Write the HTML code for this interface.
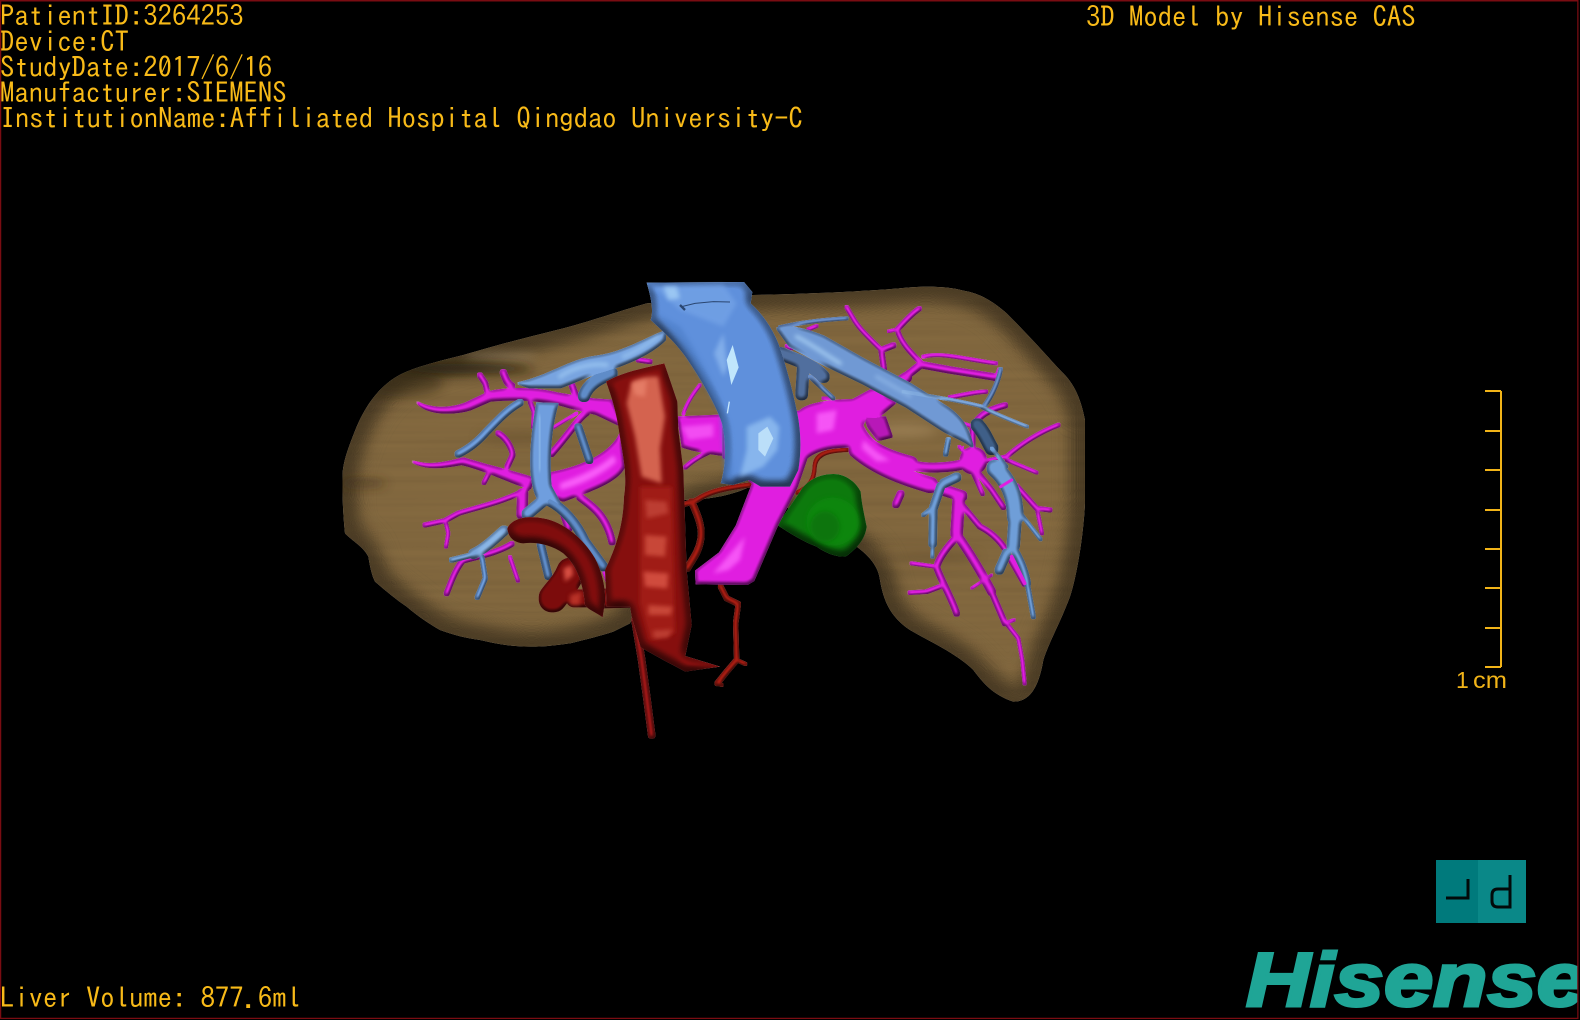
<!DOCTYPE html>
<html lang="en"><head><meta charset="utf-8"><title>3D Model by Hisense CAS</title>
<style>
html,body{margin:0;padding:0;background:#000;width:1580px;height:1020px;overflow:hidden}
svg{display:block;position:absolute;left:0;top:0}
.t{font-family:"IPAGothic","Liberation Mono",monospace;font-size:28.66px;fill:#f8ba18}
.s{fill:none;stroke-linecap:round;stroke-linejoin:round}
</style></head><body>
<svg width="1580" height="1020" viewBox="0 0 1580 1020" xmlns="http://www.w3.org/2000/svg">
<defs>
<path id="lv" d="M950 100 C860 125 780 155 680 180 C600 200 520 220 400 255 C320 275 240 295 200 320 C150 350 110 400 80 470 C60 520 40 570 38 610 C36 680 40 740 45 790 C70 815 100 830 115 860 C120 890 125 915 135 935 C170 965 200 990 230 1010 C265 1040 295 1060 330 1080 C370 1095 410 1105 450 1110 C500 1122 550 1130 600 1130 C650 1130 680 1125 720 1120 C770 1108 810 1098 850 1085 L900 1060 L1060 690 C1120 690 1200 680 1260 650 L1580 830 C1620 860 1645 890 1650 930 C1660 990 1680 1040 1740 1080 C1790 1110 1880 1150 1930 1200 C1960 1240 1990 1275 2050 1295 C2095 1295 2125 1260 2140 1170 C2160 1110 2190 1060 2220 980 C2240 920 2260 800 2265 700 L2265 450 C2255 400 2240 350 2200 310 C2170 280 2120 220 2030 130 C1990 95 1950 70 1900 62 C1860 50 1800 48 1740 52 C1660 60 1500 70 1270 75 Z"/>
<clipPath id="lc"><use href="#lv"/></clipPath>
<filter id="tube" x="0" y="0" width="1580" height="1020" filterUnits="userSpaceOnUse" color-interpolation-filters="sRGB">
<feMorphology in="SourceGraphic" operator="dilate" radius="1.05" result="d"/>
<feGaussianBlur in="d" stdDeviation="0.35" result="d2"/>
<feColorMatrix in="d2" type="matrix" values="0 0 0 0 0 0 0 0 0 0 0 0 0 0 0 0 0 0 1 0" result="al"/>
<feGaussianBlur in="al" stdDeviation="2.4" result="b"/>
<feDiffuseLighting in="b" surfaceScale="4.5" diffuseConstant="1.06" lighting-color="#fff" result="l"><feDistantLight azimuth="250" elevation="78"/></feDiffuseLighting>
<feComposite in="l" in2="al" operator="in" result="li"/>
<feBlend in="d2" in2="li" mode="multiply"/>
</filter>
<filter id="big" x="0" y="0" width="1580" height="1020" filterUnits="userSpaceOnUse" color-interpolation-filters="sRGB">
<feGaussianBlur in="SourceAlpha" stdDeviation="5" result="b"/>
<feDiffuseLighting in="b" surfaceScale="9" diffuseConstant="1.05" lighting-color="#fff" result="l"><feDistantLight azimuth="250" elevation="76"/></feDiffuseLighting>
<feComposite in="l" in2="SourceAlpha" operator="in" result="li"/>
<feBlend in="SourceGraphic" in2="li" mode="multiply"/>
</filter>
<filter id="liver" x="0" y="0" width="1580" height="1020" filterUnits="userSpaceOnUse" color-interpolation-filters="sRGB">
<feTurbulence type="fractalNoise" baseFrequency="0.003 0.14" numOctaves="2" seed="4" result="n"/>
<feColorMatrix in="n" type="matrix" values="0 0 0 0 0  0 0 0 0 0  0 0 0 0 0  1.2 0 0 0 -0.35" result="st"/>
<feGaussianBlur in="SourceAlpha" stdDeviation="14" result="b"/>
<feDiffuseLighting in="b" surfaceScale="24" diffuseConstant="1" lighting-color="#fff" result="l"><feDistantLight azimuth="270" elevation="90"/></feDiffuseLighting>
<feComposite in="l" in2="SourceAlpha" operator="in" result="li"/>
<feBlend in="SourceGraphic" in2="li" mode="multiply" result="m"/>
<feComposite in="st" in2="SourceAlpha" operator="in" result="sc"/>
<feComponentTransfer in="sc" result="sd"><feFuncA type="linear" slope="0.1"/></feComponentTransfer>
<feMerge><feMergeNode in="m"/><feMergeNode in="sd"/></feMerge>
</filter>
<filter id="soft" x="-60%" y="-60%" width="220%" height="220%"><feGaussianBlur stdDeviation="6"/></filter>
<filter id="soft2" x="-60%" y="-150%" width="220%" height="400%"><feGaussianBlur stdDeviation="16"/></filter>
</defs>
<rect width="1580" height="1020" fill="#000"/>

<!-- liver -->
<g filter="url(#liver)"><g transform="translate(330,270) scale(.33333)">
<use href="#lv" fill="#84693f"/>
</g></g>
<!-- liver streaks -->
<g transform="translate(330,270) scale(.33333)"><g clip-path="url(#lc)">
<ellipse cx="510" cy="262" rx="110" ry="12" fill="#b09c7c" opacity=".55" filter="url(#soft2)"/>
<ellipse cx="400" cy="296" rx="210" ry="16" fill="#221a0e" opacity=".85" filter="url(#soft2)"/>
<ellipse cx="220" cy="340" rx="120" ry="40" fill="#2a2010" opacity=".4" filter="url(#soft2)"/>
<ellipse cx="100" cy="640" rx="70" ry="10" fill="#3a2c18" opacity=".7" filter="url(#soft2)"/>
<ellipse cx="560" cy="500" rx="120" ry="16" fill="#5a4528" opacity=".4" filter="url(#soft2)"/>
<ellipse cx="1720" cy="480" rx="100" ry="22" fill="#a88c60" opacity=".55" filter="url(#soft2)"/>
<ellipse cx="1800" cy="860" rx="150" ry="16" fill="#4a3820" opacity=".35" filter="url(#soft2)"/>
</g></g>

<!-- thin red arteries behind -->
<g filter="url(#tube)">
<g transform="translate(690,270) scale(.33333)" class="s" stroke="#a81c12">
<path stroke-width="7" d="M322 668 C360 650 372 630 374 590 C376 560 395 542 470 540"/>
<path stroke-width="9" d="M-22 705 L20 690 C50 670 90 655 180 645"/>
<path stroke-width="14" d="M5 695 C20 730 40 770 32 810 C25 850 5 870 -8 895"/>
<path stroke-width="10" d="M92 950 L110 985 L145 1002 L137 1060 L140 1170 L110 1205 L82 1240"/>
<path stroke-width="5" d="M140 1170 L166 1182 M82 1240 L95 1245"/>
</g>
</g>
<!-- green tumour -->
<g filter="url(#big)"><g transform="translate(690,270) scale(.33333)">
<path fill="#0d7a0d" d="M262 765 L330 665 C350 630 390 612 430 612 C470 612 500 640 512 665 C515 700 520 720 530 770 C525 810 500 835 470 858 C440 865 400 845 380 830 C340 815 300 790 262 765Z"/>
</g></g>
<g transform="translate(690,270) scale(.33333)">
<ellipse cx="428" cy="755" rx="78" ry="72" fill="#0c8c10" opacity=".7" filter="url(#soft)"/>
<ellipse cx="405" cy="770" rx="44" ry="46" fill="#0a6a0a" opacity=".6" filter="url(#soft)"/>
</g>

<!-- LEFT magenta -->
<g filter="url(#tube)"><g transform="translate(330,270) scale(.33333)">
<path fill="#e01ee0" d="M262 397 C300 418 370 420 420 395 L480 366 C540 352 620 355 680 370 L790 388 L845 392 L880 470 L800 432 L720 412 C650 388 560 385 480 392 L420 418 C360 436 290 430 262 397Z"/>
<path fill="#e01ee0" d="M872 490 C850 545 770 590 660 610 L650 672 L700 692 C780 662 860 635 882 590Z"/>
<path fill="#e01ee0" d="M248 575 C300 590 350 578 400 565 C480 590 550 605 610 625 L600 655 C530 632 470 600 395 582 C340 592 290 600 248 575Z"/>
<path fill="#e01ee0" d="M1045 442 L1190 436 L1190 556 C1130 550 1090 540 1058 530Z"/>
<g class="s" stroke="#e01ee0">
<path stroke-width="11" d="M472 368 L466 340 L450 316"/>
<path stroke-width="15" d="M545 348 C530 340 525 320 520 308"/>
<path stroke-width="8" d="M600 395 L612 425 L610 470"/>
<path stroke-width="13" d="M770 428 C740 450 720 490 664 552"/>
<path stroke-width="3" d="M740 430 L668 474"/>
<path stroke-width="13" d="M740 385 L726 346"/>
<path stroke-width="11" d="M532 590 L548 555 C545 530 525 500 505 490"/>
<path stroke-width="8" d="M482 600 L462 638"/>
<path stroke-width="9" d="M592 655 C540 690 450 710 385 730 L345 752 L285 765"/>
<path stroke-width="6" d="M346 752 L355 790 L348 830"/>
<path stroke-width="28" d="M578 672 L576 732"/>
<path stroke-width="16" d="M750 682 C790 710 830 740 846 815"/>
<path stroke-width="16" d="M700 728 L716 775"/>
<path stroke-width="11" d="M545 822 C500 850 440 860 398 872 C375 900 362 940 350 970"/>
<path stroke-width="6" d="M540 862 L564 932"/>
<path stroke-width="4" d="M1060 432 C1070 400 1090 370 1110 345"/>
<path stroke-width="7" d="M1066 592 C1095 565 1130 545 1185 530"/>
<path stroke-width="9" d="M925 270 L960 275"/>
<path stroke-width="4" d="M822 905 L832 935"/>
</g>
</g></g>
<g transform="translate(330,270) scale(.33333)" fill="#ff6cff">
<path opacity=".8" filter="url(#soft)" d="M690 640 C740 620 800 600 850 555 L860 575 C810 620 740 650 690 660Z"/>
<path opacity=".6" filter="url(#soft)" d="M1055 470 L1150 462 L1150 500 L1075 510Z"/>
</g>

<!-- LEFT blue -->
<g filter="url(#tube)"><g transform="translate(330,270) scale(.33333)">
<path fill="#78a4e0" d="M1005 185 C945 208 880 250 800 260 C720 270 660 320 565 340 L600 352 L690 352 L790 312 C860 292 950 262 1005 208Z"/>
<path fill="#6f9ede" d="M622 400 L682 402 C662 470 655 560 662 650 L690 702 L640 705 C610 680 598 610 606 520 C610 470 615 440 622 400Z"/>
<g class="s">
<path stroke="#5f8cc8" stroke-width="30" d="M845 310 C810 325 775 340 762 378"/>
<path stroke="#6f9ede" stroke-width="28" d="M636 695 L592 732"/>
<path stroke="#5f8cc8" stroke-width="22" d="M660 695 C700 715 740 760 765 815 L820 890"/>
<path stroke="#6f9ede" stroke-width="16" d="M570 398 C530 420 500 455 470 485 C440 520 410 540 385 552"/>
<path stroke="#5f8cc8" stroke-width="18" d="M745 472 L778 570"/>
<path stroke="#7aa6dc" stroke-width="24" d="M522 782 C490 810 465 835 430 852"/>
<path stroke="#7aa6dc" stroke-width="10" d="M430 854 L365 870"/>
<path stroke="#6f9ede" stroke-width="9" d="M456 862 L466 925 L442 982"/>
<path stroke="#5f8cc8" stroke-width="18" d="M632 822 L655 918"/>
</g>
</g></g>
<g transform="translate(330,270) scale(.33333)" class="s" stroke="#a6d0f6" opacity=".7">
<path stroke-width="12" filter="url(#soft)" d="M690 320 C730 290 790 280 830 285"/>
<path stroke-width="10" filter="url(#soft)" d="M880 260 C920 245 950 225 985 200"/>
<path stroke-width="10" filter="url(#soft)" d="M630 440 L628 600"/>
<path stroke-width="10" filter="url(#soft)" d="M450 845 L515 785"/>
</g>

<!-- RIGHT magenta -->
<g filter="url(#tube)"><g transform="translate(690,270) scale(.33333)">
<path fill="#e01ee0" d="M190 640 L320 650 L262 762 L190 930 L170 942 L20 940 L18 905 L90 850 L140 770Z"/>
<path fill="#e01ee0" d="M100 438 L330 425 C350 405 400 392 490 390 L545 360 L615 398 L565 440 L525 445 L490 530 C430 530 385 535 350 562 L320 650 L190 640 L100 560Z"/>
<path fill="#b818b8" d="M525 440 L585 442 L605 500 L565 510 L535 470Z"/>
<g class="s" stroke="#e01ee0">
<path stroke-width="42" d="M495 470 C520 530 560 555 660 582"/>
<path stroke-width="24" d="M655 585 C720 598 790 595 860 572"/>
<path stroke-width="42" d="M500 540 C560 592 640 622 720 645"/>
<path stroke-width="28" d="M715 645 L815 678"/>
<path stroke-width="26" d="M520 392 C560 370 610 350 650 322"/>
<path stroke-width="16" d="M640 325 L692 284 L780 300 L920 322"/>
<path stroke-width="5" d="M915 328 L928 298"/>
<path stroke-width="9" d="M692 278 C660 245 630 215 622 178 C640 160 665 130 688 116"/>
<path stroke-width="4" d="M622 178 L596 184"/>
<path stroke-width="6" d="M700 260 C760 245 830 270 918 280"/>
<path stroke-width="12" d="M582 298 L574 240 L610 226"/>
<path stroke-width="7" d="M574 240 C540 205 505 175 488 142 L470 112"/>
<path stroke-width="7" d="M780 382 C820 375 860 365 888 365"/>
<path stroke-width="5" d="M290 228 L305 235 M355 178 L380 168 M400 385 L430 385"/>
<path stroke-width="17" d="M632 672 L618 703"/>
<path stroke-width="32" d="M806 690 L800 790"/>
<path stroke-width="20" d="M805 800 C840 850 870 900 905 965"/>
<path stroke-width="12" d="M900 955 L945 1060"/>
<path stroke-width="6" d="M945 1055 L985 1105 L997 1170 L1004 1240"/>
<path stroke-width="4" d="M950 1058 L972 1050"/>
<path stroke-width="11" d="M812 700 L870 770 C910 790 940 820 960 865 L1004 942"/>
<path stroke-width="2" d="M905 915 L845 955"/>
<path stroke-width="14" d="M790 812 C765 840 745 870 740 892 C755 935 785 985 800 1030"/>
<path stroke-width="6" d="M735 890 L665 880"/>
<path stroke-width="8" d="M750 950 L710 965 L660 968"/>
<circle cx="850" cy="572" r="38" fill="#e01ee0" stroke="none"/>
<path stroke-width="12" d="M848 545 L848 470 C865 440 890 420 945 406"/>
<path stroke-width="4" d="M790 450 L848 470"/>
<path stroke-width="4" d="M808 530 L822 545"/>
<path stroke-width="7" d="M880 575 L950 560 C990 525 1040 490 1105 465"/>
<path stroke-width="5" d="M950 570 L1040 608"/>
<path stroke-width="10" d="M865 610 L905 660 L940 712"/>
<path stroke-width="7" d="M850 610 L878 672"/>
<path stroke-width="9" d="M980 648 L1040 715 L1080 720"/>
<path stroke-width="6" d="M1040 712 L1056 790"/>
</g>
</g></g>
<g transform="translate(690,270) scale(.33333)" fill="#ff6cff">
<path opacity=".7" filter="url(#soft)" d="M520 510 L560 545 L600 572 L560 575 L515 535Z"/>
<path opacity=".7" filter="url(#soft)" d="M130 840 L165 800 L150 870 L115 900 L70 910Z"/>
<path opacity=".7" filter="url(#soft)" d="M380 430 L440 420 L430 480 L380 490Z"/>
</g>

<!-- RIGHT blue -->
<g filter="url(#tube)"><g transform="translate(690,270) scale(.33333)">
<g class="s">
<path stroke="#3f5f88" stroke-width="34" d="M862 465 C885 490 890 510 905 535"/>
<path stroke="#516f9e" stroke-width="32" d="M270 250 C320 270 370 285 400 320"/>
<path stroke="#516f9e" stroke-width="32" d="M340 290 L335 372"/>
<path stroke="#6a8ec8" stroke-width="6" d="M360 320 L430 385"/>
</g>
<path fill="#7099d4" d="M262 175 C300 165 350 180 400 200 L520 268 L660 342 L770 412 C810 440 835 470 848 530 C825 510 790 500 755 478 L650 410 L520 340 L400 282 L300 228Z"/>
<g class="s">
<path stroke="#6a8ec8" stroke-width="6" d="M270 172 C320 160 380 150 470 145"/>
<path stroke="#7ea8dc" stroke-width="4" d="M640 365 C720 378 800 390 870 408 C910 430 960 450 1012 470"/>
<path stroke="#6a8ec8" stroke-width="7" d="M880 412 C905 380 925 335 932 298"/>
<path stroke="#6f9ed8" stroke-width="44" d="M915 595 C955 630 975 675 976 740"/>
<path stroke="#6f9ed8" stroke-width="34" d="M976 740 L970 825"/>
<path stroke="#6f9ed8" stroke-width="16" d="M968 830 C985 860 1002 890 1012 940"/>
<path stroke="#6f9ed8" stroke-width="9" d="M1012 940 L1030 1040"/>
<path stroke="#6f9ed8" stroke-width="5" d="M995 735 L1052 808"/>
<path stroke="#6f9ed8" stroke-width="22" d="M950 850 L928 900"/>
<path stroke="#6f9ed8" stroke-width="22" d="M800 622 L762 640"/>
<path stroke="#6f9ed8" stroke-width="20" d="M752 650 L730 715 L728 820"/>
<path stroke="#6f9ed8" stroke-width="6" d="M728 820 L727 860 M725 715 L700 735"/>
<path stroke="#6f9ed8" stroke-width="10" d="M775 510 L767 552"/>
<path stroke="#6f9ed8" stroke-width="4" d="M905 535 L950 590"/>
</g>
</g></g>
<g transform="translate(690,270) scale(.33333)" class="s">
<path stroke="#b2dafa" stroke-width="12" opacity=".7" filter="url(#soft)" d="M320 200 C360 220 400 250 450 280"/>
<path stroke="#9cc4f0" stroke-width="10" opacity=".6" filter="url(#soft)" d="M560 320 L660 378"/>
<path stroke="#e01ee0" stroke-width="9" d="M932 650 L965 630"/>
<path stroke="#e01ee0" stroke-width="11" d="M965 860 L1004 940"/>
<path stroke="#e01ee0" stroke-width="5" d="M815 540 L820 530"/>
</g>

<!-- IVC -->
<g filter="url(#big)"><g transform="translate(690,270) scale(.33333)">
<path fill="#5f90dc" d="M-130 38 L162 36 L187 66 L182 100 C215 130 245 170 265 220 C290 290 310 370 322 430 C332 480 335 540 325 600 L300 650 L212 650 L178 630 L128 645 L92 640 C110 580 108 510 96 460 C80 410 40 340 0 280 C-35 225 -75 190 -118 150 C-108 120 -118 80 -130 38Z"/>
</g></g>
<g transform="translate(690,270) scale(.33333)">
<path fill="#77a6e8" opacity=".65" filter="url(#soft)" d="M-110 50 L100 44 L140 100 L100 170 L-30 120Z"/>
<path fill="#a2cdf6" opacity=".85" filter="url(#soft)" d="M-80 50 L-40 50 L-30 85 L-65 90Z"/>
<path fill="#8ab6ee" opacity=".8" filter="url(#soft)" d="M72 250 L100 190 L112 290 L100 320Z"/>
<path fill="#c0e6fc" d="M110 270 L128 225 L146 292 L124 345Z"/>
<path fill="#4a7ac4" opacity=".55" filter="url(#soft)" d="M-100 130 C-50 190 -10 250 30 320 L90 430 L105 620 L130 640 L120 470 C90 370 30 260 -30 170Z"/>
<path fill="#8ebcf0" opacity=".85" filter="url(#soft)" d="M170 470 L240 440 L268 470 L262 540 L220 590 L150 620 L170 540Z"/>
<path fill="#c4e6fa" opacity=".85" d="M205 490 L232 470 L250 505 L225 560 L205 540Z"/>
<path d="M-25 110 L15 100 L70 95 L120 96" fill="none" stroke="#2a4670" stroke-width="3"/>
<path d="M-30 105 L-15 120" stroke="#2a4670" stroke-width="7"/>
<path d="M118 395 L112 430" stroke="#c8e8fb" stroke-width="4"/>
</g>

<!-- aorta + renal -->
<g filter="url(#tube)"><g transform="translate(330,270) scale(.33333)" class="s">
<path stroke="#9c1616" stroke-width="16" d="M915 1050 L935 1170 L950 1280 L965 1395"/>
<path stroke="#7c0c0c" stroke-width="78" d="M722 905 C705 945 690 955 668 985"/>
<path stroke="#7c0c0c" stroke-width="48" d="M735 985 L830 985"/>
<path fill="#7c0c0c" stroke="none" d="M820 960 L910 945 L915 1010 L820 1012Z"/>
</g></g>
<g filter="url(#big)"><g transform="translate(330,270) scale(.33333)">
<path fill="#800d0d" d="M532 775 C545 745 590 735 640 745 C700 755 760 805 795 865 C820 910 832 980 822 1015 L818 1042 C795 1025 775 1020 765 1005 C760 950 745 890 700 850 C665 825 620 815 580 820 C555 818 535 805 532 775Z"/>
</g></g>
<g filter="url(#big)"><g transform="translate(330,270) scale(.33333)">
<path fill="#860f0e" d="M828 335 C880 305 950 292 1003 280 L1020 330 L1042 395 L1045 480 L1060 600 L1064 720 L1070 900 L1085 1065 L1066 1158 L1170 1190 L1066 1205 L1000 1170 L932 1132 L905 1040 L900 1010 L830 1010 L825 900 C860 830 880 760 882 680 C892 620 880 560 868 490 C860 430 845 380 828 335Z"/>
</g></g>
<g transform="translate(330,270) scale(.33333)">
<path fill="#a01e16" filter="url(#soft)" d="M930 650 L1025 650 L1035 1090 L960 1110 L930 1000Z"/>
<path fill="#d46450" filter="url(#soft)" d="M905 335 C930 322 960 318 985 320 L1005 440 L990 535 L995 640 L935 620 L915 500 L890 400Z"/>
<path fill="#f08c74" opacity=".6" filter="url(#soft)" d="M905 340 L950 328 L945 380 L915 375Z"/>
<path fill="#bc3c30" filter="url(#soft)" d="M945 690 L1010 695 L1015 730 L950 745Z"/>
<path fill="#c84638" filter="url(#soft)" d="M945 795 L1010 800 L1005 860 L945 855Z"/>
<path fill="#d04c3e" filter="url(#soft)" d="M940 905 L1015 910 L1012 955 L945 950Z"/>
<path fill="#c84638" filter="url(#soft)" d="M955 1005 L1028 1010 L1022 1035 L955 1035Z"/>
<path fill="#bc3c30" filter="url(#soft)" d="M968 1082 L1028 1078 L1015 1102 L972 1106Z"/>
<path fill="#d84f42" filter="url(#soft)" d="M700 895 L725 885 L730 915 L705 935Z"/>
<path fill="#b83226" filter="url(#soft)" d="M720 975 L755 965 L750 1005 L720 1005Z"/>
</g>

<!-- text -->
<g style="white-space:pre">
<text x="0" y="26" class="t">PatientID:3264253</text>
<text x="0" y="52" class="t">Device:CT</text>
<text x="0" y="77.500" class="t">StudyDate:2017/6/16</text>
<text x="0" y="103" class="t">Manufacturer:SIEMENS</text>
<text x="0.500" y="128.500" class="t">InstitutionName:Affiliated Hospital Qingdao University-C</text>
<text x="1086" y="27" class="t">3D Model by Hisense CAS</text>
<text x="0" y="1008" class="t">Liver Volume: 877.6ml</text>
</g>

<!-- ruler -->
<g stroke="#f2b418" stroke-width="2" fill="none">
<path d="M1501 391 V667"/>
<path d="M1485 391 H1501 M1485 431 H1501 M1485 470 H1501 M1485 510 H1501 M1485 549 H1501 M1485 588 H1501 M1485 628 H1501 M1485 667 H1501"/>
</g>
<text y="688" font-family="Liberation Sans, sans-serif" font-size="23" fill="#f2b418"><tspan x="1456">1</tspan><tspan x="1473" textLength="34" lengthAdjust="spacingAndGlyphs">cm</tspan></text>

<!-- orientation cube -->
<rect x="1436" y="860" width="43" height="63" fill="#007a7c"/>
<rect x="1478" y="860" width="48" height="63" fill="#0a8888"/>
<g fill="none" stroke="#020a0a" stroke-width="3">
<path d="M1446 898 H1468 V879"/>
<path d="M1510 875 V907 H1498 Q1492 907 1492 901 V895 Q1492 889 1498 889 H1510"/>
</g>

<!-- Hisense logo -->
<text x="1246" y="1006" font-family="Liberation Sans, sans-serif" font-weight="bold" font-style="italic" font-size="76" fill="#1fa596" stroke="#1fa596" stroke-width="3" textLength="340" lengthAdjust="spacingAndGlyphs">Hisense</text>

<!-- window border -->
<rect x="0.500" y="0.750" width="1577.500" height="1017.750" fill="none" stroke="#7a0c12" stroke-width="1.500"/>
<rect x="1578.500" y="0" width="2" height="1020" fill="#000"/>
<rect x="0" y="1019" width="1580" height="1" fill="#000"/>
</svg>
</body></html>
